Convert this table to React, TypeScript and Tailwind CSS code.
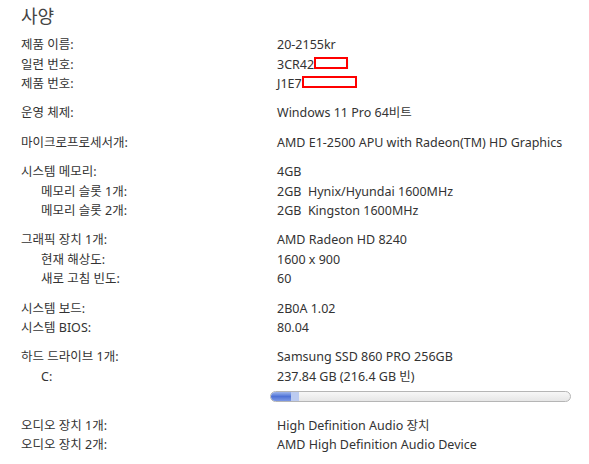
import React from 'react';

type Row = { label: string; value?: React.ReactNode; indent?: boolean };

const Redact: React.FC<{ w: string }> = ({ w }) => (
  <span className={`relative z-10 inline-block ${w} h-[12px] border-2 border-[#ff0000] bg-white align-[-4px]`} />
);

const groups: Row[][] = [
  [
    { label: '제품 이름:', value: '20-2155kr' },
    {
      label: '일련 번호:',
      value: (
        <span className="inline-flex items-baseline">
          3CR42
          <Redact w="w-[34px]" />
          <span className="-ml-[5px]">1</span>
        </span>
      ),
    },
    {
      label: '제품 번호:',
      value: (
        <span className="inline-flex items-baseline">
          J1E7
          <Redact w="w-[55px]" />
        </span>
      ),
    },
  ],
  [{ label: '운영 체제:', value: 'Windows 11 Pro 64비트' }],
  [{ label: '마이크로프로세서개:', value: 'AMD E1-2500 APU with Radeon(TM) HD Graphics' }],
  [
    { label: '시스템 메모리:', value: '4GB' },
    { label: '메모리 슬롯 1개:', value: '2GB\u00a0\u00a0Hynix/Hyundai 1600MHz', indent: true },
    { label: '메모리 슬롯 2개:', value: '2GB\u00a0\u00a0Kingston 1600MHz', indent: true },
  ],
  [
    { label: '그래픽 장치 1개:', value: 'AMD Radeon HD 8240' },
    { label: '현재 해상도:', value: '1600 x 900', indent: true },
    { label: '새로 고침 빈도:', value: '60', indent: true },
  ],
  [
    { label: '시스템 보드:', value: '2B0A 1.02' },
    { label: '시스템 BIOS:', value: '80.04' },
  ],
];

const Line: React.FC<{ row: Row }> = ({ row }) => (
  <div className="grid grid-cols-[256px_1fr] h-[19.4px] items-center">
    <div className={row.indent ? 'pl-[20px]' : ''}>{row.label}</div>
    <div>{row.value}</div>
  </div>
);

const App: React.FC = () => {
  return (
    <div
      className="w-[589px] h-[464px] bg-white text-[#333] text-[12.5px] pl-[21px] pt-[4px] overflow-hidden"
      style={{ fontFamily: '"Noto Sans", "Noto Sans CJK KR", sans-serif' }}
    >
      <h1 className="text-[18px] leading-[24px] text-[#444] mb-[8px]">사양</h1>

      {groups.map((g, i) => (
        <div key={i} className={i === 0 ? '' : 'mt-[10px]'}>
          {g.map((row) => (
            <Line key={row.label} row={row} />
          ))}
        </div>
      ))}

      <div className="mt-[10px]">
        <Line row={{ label: '하드 드라이브 1개:', value: 'Samsung SSD 860 PRO 256GB' }} />
        <Line row={{ label: 'C:', value: '237.84 GB (216.4 GB 빈)', indent: true }} />
        <div className="grid grid-cols-[249px_1fr] h-[19.4px] items-center">
          <div />
          <div className="w-[301px] h-[11px] rounded-full border border-[#b5b5b5] bg-gradient-to-b from-[#f7f7f7] to-[#e6e6e6] overflow-hidden flex">
            <div className="w-[20px] h-full bg-gradient-to-b from-[#9fb5ec] via-[#4f72d6] to-[#7d98e4]" />
            <div className="w-[8px] h-full bg-[#bccbf0]" />
          </div>
        </div>
      </div>

      <div className="mt-[10px]">
        <Line row={{ label: '오디오 장치 1개:', value: 'High Definition Audio 장치' }} />
        <Line row={{ label: '오디오 장치 2개:', value: 'AMD High Definition Audio Device' }} />
      </div>
    </div>
  );
};

export default App;
